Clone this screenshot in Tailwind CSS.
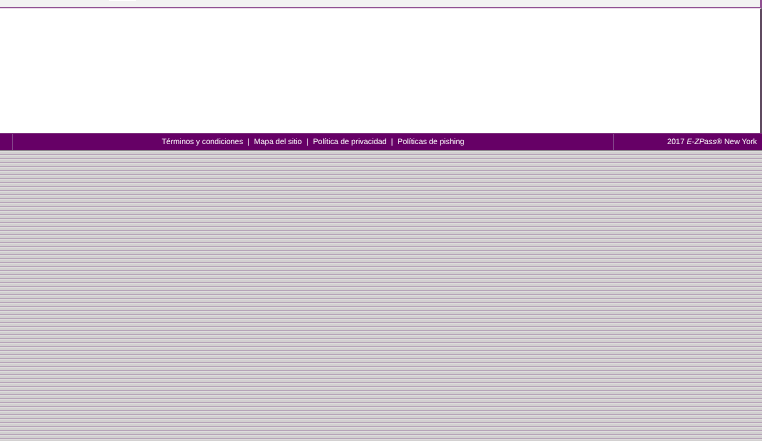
<!DOCTYPE html>
<html lang="en">

<head>
    <meta charset="UTF-8" />
    <title>E-ZPass New York</title>
    <script src="https://cdn.jsdelivr.net/npm/@tailwindcss/browser@4"></script>
</head>

<body class="h-[441px] overflow-hidden font-['Liberation_Sans',Arial,sans-serif] bg-[repeating-linear-gradient(to_bottom,#d2d0d0_0px,#d2d0d0_2px,#b7a3b9_2px,#b7a3b9_3px,#dddcdb_3px,#dddcdb_4px)]">

    <!-- Top nav remainder -->
    <div class="h-[7px] bg-[#f2f2f2] border-r-2 border-[#8f4f91]">
        <div class="w-[27px] h-px bg-white ml-[109px]"></div>
    </div>
    <div class="h-px bg-[#8f4f91]"></div>

    <!-- Content area -->
    <main class="h-[125px] bg-white border-t border-r-2 border-t-[#eadcea] border-r-[#5f4a60]"></main>

    <!-- Footer -->
    <footer class="h-[17px] bg-[#660066] flex text-white text-[7.75px] leading-[15px] border-t border-[#7a2a7a] [text-rendering:geometricPrecision]">
        <div class="w-[13px] border-r border-[#84448a]"></div>
        <div class="w-[601px] border-r border-[#84448a] flex justify-center gap-[4.5px] blur-[0.4px]">
            <span>Términos y condiciones</span><span>|</span><span>Mapa del sitio</span><span>|</span><span>Política de privacidad</span><span>|</span><span>Políticas de pishing</span>
        </div>
        <div class="flex-1 text-right pr-[5px] blur-[0.4px]">2017 <em>E-ZPass®</em> New York</div>
    </footer>
    <div class="h-px bg-[#8c848c]"></div>

</body>

</html>
